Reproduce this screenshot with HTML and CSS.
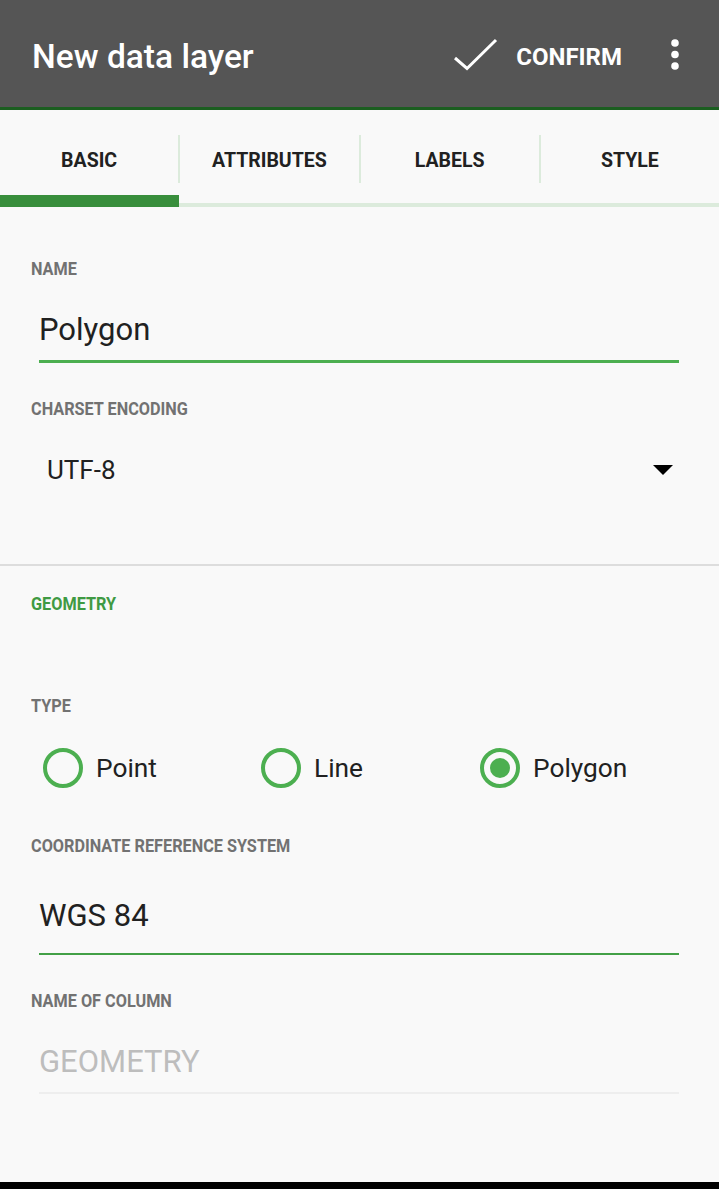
FILE: index.html
```html
<!DOCTYPE html>
<html>
<head>
<meta charset="utf-8">
<link rel="stylesheet" href="styles.css">
</head>
<body>
<div class="page">
  <header class="appbar">
    <div class="title">New data layer</div>
    <div class="actions">
      <svg class="check" width="44" height="36" viewBox="0 0 44 36"><polyline points="1,19 13,29.5 42,1" fill="none" stroke="#fff" stroke-width="3"/></svg>
      <span class="confirm">CONFIRM</span>
      <svg class="kebab" width="8" height="32" viewBox="0 0 8 32"><circle cx="4" cy="3" r="3.8" fill="#fff"/><circle cx="4" cy="14.5" r="3.8" fill="#fff"/><circle cx="4" cy="26" r="3.8" fill="#fff"/></svg>
    </div>
  </header>

  <nav class="tabs">
    <div class="tab active">BASIC</div>
    <div class="tab-divider"></div>
    <div class="tab">ATTRIBUTES</div>
    <div class="tab-divider"></div>
    <div class="tab">LABELS</div>
    <div class="tab-divider"></div>
    <div class="tab">STYLE</div>
  </nav>

  <section class="section basic">
    <div class="label name-label"><span>NAME</span></div>
    <div class="field focused">Polygon</div>
    <div class="label charset-label"><span>CHARSET ENCODING</span></div>
    <div class="spinner">
      <span class="spinner-value">UTF-8</span>
      <svg class="arrow" width="20" height="10" viewBox="0 0 20 10"><polygon points="0,0 20,0 10,10" fill="#000"/></svg>
    </div>
  </section>

  <div class="divider"></div>

  <section class="section geometry">
    <div class="label section-title"><span>GEOMETRY</span></div>
    <div class="label type-label"><span>TYPE</span></div>
    <div class="radios">
      <div class="radio"><span class="ring"></span><span class="radio-text">Point</span></div>
      <div class="radio"><span class="ring"></span><span class="radio-text">Line</span></div>
      <div class="radio"><span class="ring checked"></span><span class="radio-text">Polygon</span></div>
    </div>
    <div class="label crs-label"><span>COORDINATE REFERENCE SYSTEM</span></div>
    <div class="field crs">WGS 84</div>
    <div class="label column-label"><span>NAME OF COLUMN</span></div>
    <div class="field placeholder">GEOMETRY</div>
  </section>

  <div class="navbar"></div>
</div>
</body>
</html>
```

FILE: styles.css
```css
html, body {
  margin: 0;
  padding: 0;
  background: #f9f9f9;
}

body {
  font-family: Roboto, "Noto Sans", sans-serif;
  color: #212121;
}

.page {
  display: flex;
  flex-direction: column;
  min-height: 1189px;
}

.appbar {
  height: 101px;
  padding-top: 6px;
  background: #555555;
  border-bottom: 3px solid #1b5e20;
  display: flex;
  align-items: center;
  padding-left: 32px;
  padding-right: 40px;
}

.title {
  color: #fff;
  font-size: 33.5px;
  font-weight: 500;
  line-height: 40px;
}

.actions {
  margin-left: auto;
  display: flex;
  align-items: center;
}

.check {
  overflow: visible;
  margin-right: 18px;
}

.confirm {
  color: #fff;
  font-size: 24px;
  font-weight: 700;
  line-height: 40px;
}

.kebab {
  overflow: visible;
  margin-left: 49px;
  position: relative;
  top: -1px;
}

.tabs {
  display: flex;
  height: 97px;
  box-shadow: inset 0 -4px 0 #dcebdc;
}

.tab {
  flex: 1;
  position: relative;
  display: flex;
  align-items: center;
  justify-content: center;
  padding-top: 3px;
  font-size: 19.5px;
  font-weight: 700;
  color: #212121;
}

.tab.active::after {
  content: "";
  position: absolute;
  left: 0;
  right: -1px;
  bottom: 0;
  height: 12px;
  background: #388e3c;
}

.tab-divider {
  width: 2px;
  height: 48px;
  margin-top: 25px;
  background: #dcebdc;
}

.section {
  padding-left: 31px;
  padding-right: 40px;
}

.label {
  font-size: 19px;
  font-weight: 700;
  line-height: 22px;
  color: #727272;
  white-space: nowrap;
}

.label span {
  display: inline-block;
  transform: scaleX(0.855);
  transform-origin: left center;
}

.name-label { margin-top: 51px; }

.field {
  margin-left: 8px;
  font-size: 31px;
  line-height: 40px;
  color: #212121;
}

.field.focused {
  margin-top: 30px;
  padding-bottom: 10px;
  border-bottom: 3px solid #4caf50;
}

.charset-label { margin-top: 35px; }

.spinner {
  margin-top: 32px;
  padding-left: 16px;
  padding-right: 6px;
  display: flex;
  align-items: center;
  justify-content: space-between;
  height: 36px;
  font-size: 26px;
  color: #212121;
}

.arrow { display: block; }

.divider {
  margin-top: 76px;
  height: 2px;
  background: #dddddd;
}

.section-title {
  margin-top: 27px;
  color: #3f9a43;
}

.type-label { margin-top: 80px; }

.radios {
  margin-top: 31px;
  padding-left: 12px;
  display: grid;
  grid-template-columns: 218px 219px 1fr;
  height: 40px;
}

.radio {
  display: flex;
  align-items: center;
}

.ring {
  width: 40px;
  height: 40px;
  box-sizing: border-box;
  border: 4px solid #4caf50;
  border-radius: 50%;
  display: flex;
  align-items: center;
  justify-content: center;
  flex: none;
}

.ring.checked::after {
  content: "";
  width: 20px;
  height: 20px;
  border-radius: 50%;
  background: #4caf50;
}

.radio-text {
  margin-left: 13px;
  font-size: 26.3px;
  color: #212121;
}

.crs-label { margin-top: 47px; }

.field.crs {
  margin-top: 39px;
  padding-bottom: 17px;
  border-bottom: 2px solid #43a047;
}

.column-label { margin-top: 35px; }

.field.placeholder {
  margin-top: 30px;
  padding-bottom: 10px;
  color: #bdbdbd;
  border-bottom: 2px solid #eeeeee;
}

.navbar {
  margin-top: auto;
  height: 7px;
  background: #000;
}
```
